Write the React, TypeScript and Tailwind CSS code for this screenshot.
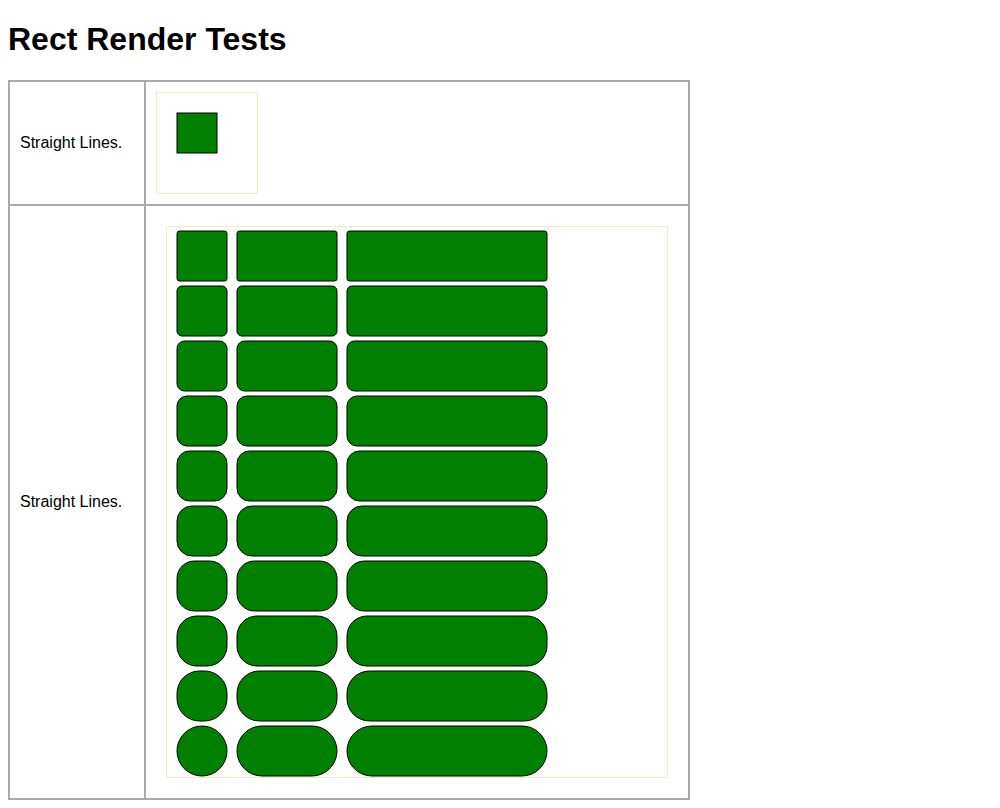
import React from "react";

const rows = Array.from({ length: 10 }, (_, i) => i);
const cols = [
  { x: 10, w: 50 },
  { x: 70, w: 100 },
  { x: 180, w: 200 },
];

export default function App() {
  return (
    <div
      className="min-h-screen bg-white px-2 pt-[21px] text-black"
      style={{ fontFamily: '"Liberation Sans", Arial, sans-serif' }}
    >
      <h1 className="h-[37px] text-[32px] font-bold leading-[37px] mb-[22px]">
        Rect Render Tests
      </h1>
      <div className="w-[682px] border-2 border-[#a9a9a9]">
        <div className="flex border-b-2 border-[#a9a9a9]">
          <div className="flex w-[136px] items-center border-r-2 border-[#a9a9a9] px-[10px] text-[16px]">
            Straight Lines.
          </div>
          <div className="flex-1 p-[10px]">
            <svg
              width="100"
              height="100"
              className="box-content block border border-[#eeeec0]"
            >
              <rect x="20" y="20" width="40" height="40" fill="#008000" stroke="#000" strokeWidth="1" />
            </svg>
          </div>
        </div>
        <div className="flex">
          <div className="flex w-[136px] items-center border-r-2 border-[#a9a9a9] px-[10px] text-[16px]">
            Straight Lines.
          </div>
          <div className="flex-1 p-[20px]">
            <svg
              width="500"
              height="550"
              className="box-content block border border-[#eeeec0]"
            >
              {rows.map((i) =>
                cols.map((c, j) => (
                  <rect
                    key={`${i}-${j}`}
                    x={c.x}
                    y={4 + i * 55}
                    width={c.w}
                    height={50}
                    rx={(i + 1) * 2.5}
                    ry={(i + 1) * 2.5}
                    fill="#008000"
                    stroke="#000"
                    strokeWidth="1"
                  />
                ))
              )}
            </svg>
          </div>
        </div>
      </div>
    </div>
  );
}
